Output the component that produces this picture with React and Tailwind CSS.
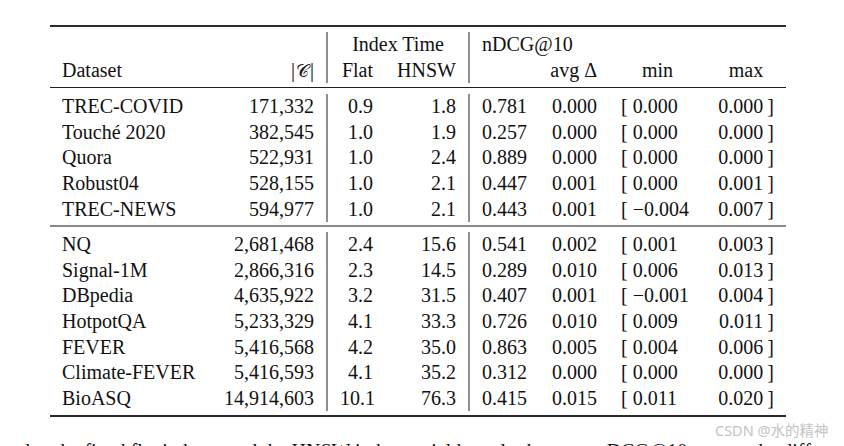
import React from "react";

const groups = [
  [
    ["TREC-COVID", "171,332", "0.9", "1.8", "0.781", "0.000", "0.000", "0.000"],
    ["Touché 2020", "382,545", "1.0", "1.9", "0.257", "0.000", "0.000", "0.000"],
    ["Quora", "522,931", "1.0", "2.4", "0.889", "0.000", "0.000", "0.000"],
    ["Robust04", "528,155", "1.0", "2.1", "0.447", "0.001", "0.000", "0.001"],
    ["TREC-NEWS", "594,977", "1.0", "2.1", "0.443", "0.001", "\u22120.004", "0.007"],
  ],
  [
    ["NQ", "2,681,468", "2.4", "15.6", "0.541", "0.002", "0.001", "0.003"],
    ["Signal-1M", "2,866,316", "2.3", "14.5", "0.289", "0.010", "0.006", "0.013"],
    ["DBpedia", "4,635,922", "3.2", "31.5", "0.407", "0.001", "\u22120.001", "0.004"],
    ["HotpotQA", "5,233,329", "4.1", "33.3", "0.726", "0.010", "0.009", "0.011"],
    ["FEVER", "5,416,568", "4.2", "35.0", "0.863", "0.005", "0.004", "0.006"],
    ["Climate-FEVER", "5,416,593", "4.1", "35.2", "0.312", "0.000", "0.000", "0.000"],
    ["BioASQ", "14,914,603", "10.1", "76.3", "0.415", "0.015", "0.011", "0.020"],
  ],
];

const cell = "h-[25.6px] px-3 whitespace-nowrap";
const vline = "border-l-2 border-[#8f8f8f]";

function Row({ r }) {
  return (
    <>
      <div className={`${cell} text-left`}>{r[0]}</div>
      <div className={`${cell} text-right`}>{r[1]}</div>
      <div className={`${cell} text-right ${vline}`}>{r[2]}</div>
      <div className={`${cell} text-right`}>{r[3]}</div>
      <div className={`${cell} text-left ${vline}`}>{r[4]}</div>
      <div className={`${cell} text-right`}>{r[5]}</div>
      <div className={`${cell} text-left`}>
        <span className="font-light">[</span>
        <span className="ml-[5px]">{r[6]}</span>
      </div>
      <div className={`${cell} text-right`}>
        <span>{r[7]}</span>
        <span className="ml-[4px]">]</span>
      </div>
    </>
  );
}

export default function App() {
  return (
    <div className="relative w-[844px] h-[446px] overflow-hidden bg-white text-[#111] font-['Liberation_Serif','Times_New_Roman',serif] text-[20px] leading-[25.6px]">
      <div className="pt-[25px] pl-[50px]">
        <div className="grid w-[736px] grid-cols-[161px_115px_59px_83px_69px_72px_97px_80px]">
          <div className="col-span-8 h-[2px] bg-[#2b2b2b]" />
          <div className="col-span-8 h-[5px]" />

          <div className={cell} />
          <div className={cell} />
          <div className={`col-span-2 text-center ${cell} ${vline}`}>Index Time</div>
          <div className={`col-span-4 text-left ${cell} ${vline}`}>nDCG@10</div>

          <div className={`${cell} text-left`}>Dataset</div>
          <div className={`${cell} text-right`}>
            |<span className="mx-[1px] text-[18px]">{"\u{1D49E}"}</span>|
          </div>
          <div className={`${cell} text-right ${vline}`}>Flat</div>
          <div className={`${cell} text-right`}>HNSW</div>
          <div className={`${cell} ${vline}`} />
          <div className={`${cell} text-right`}>avg Δ</div>
          <div className={`${cell} text-center`}>min</div>
          <div className={`${cell} text-center`}>max</div>

          <div className="col-span-8 h-[4px]" />
          <div className="col-span-8 h-px bg-[#1e1e1e]" />
          <div className="col-span-8 h-[6px]" />

          {groups[0].map((r) => (
            <Row key={r[0]} r={r} />
          ))}

          <div className="col-span-8 h-[3px]" />
          <div className="col-span-8 h-[2px] bg-[#8a8a8a]" />
          <div className="col-span-8 h-[5px]" />

          {groups[1].map((r) => (
            <Row key={r[0]} r={r} />
          ))}

          <div className="col-span-8 h-[4px]" />
          <div className="col-span-8 h-[2px] bg-[#2b2b2b]" />
        </div>
      </div>

      <div className="mt-[22px] pl-[20px] whitespace-nowrap">
        that the fixed flat indexes and the HNSW indexes yield nearly the same nDCG@10 scores; the differences are small.
      </div>

      <div className="absolute left-[715px] top-[422px] text-[14.5px] leading-[16px] text-[#c4c4c4] font-['Noto_Sans','Noto_Sans_CJK_SC',sans-serif]">
        CSDN @水的精神
      </div>
    </div>
  );
}
